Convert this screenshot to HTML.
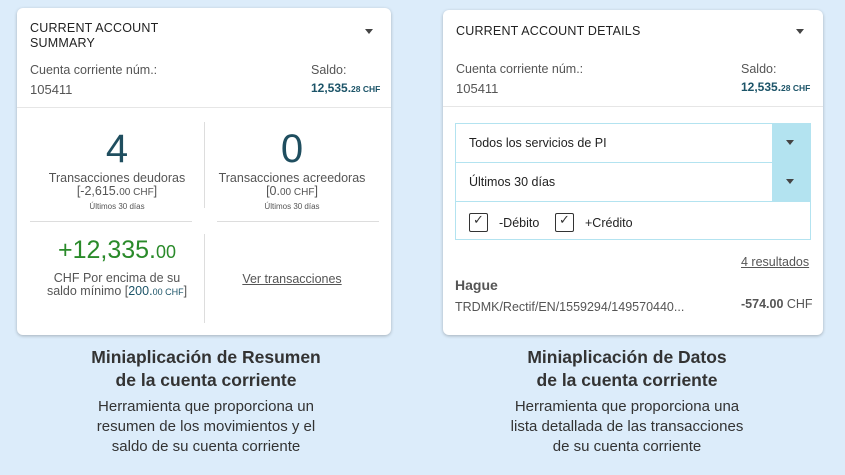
<!DOCTYPE html>
<html><head><meta charset="utf-8"><style>
*{margin:0;padding:0;box-sizing:border-box}
body{width:845px;height:475px;background:#dcecfa;font-family:"Liberation Sans",sans-serif;position:relative;overflow:hidden;color:#333}
.card{position:absolute;background:#fff;border-radius:6px;box-shadow:0 1px 3px rgba(0,0,0,.25)}
.a{position:absolute;white-space:nowrap}
.t{font-size:12.5px;letter-spacing:.2px;color:#222;line-height:15px}
.g{font-size:12.5px;color:#555}
.tri{position:absolute;width:0;height:0;border-left:4px solid transparent;border-right:4px solid transparent;border-top:5px solid #444}
.bal{font-size:12px;font-weight:bold;color:#1c5468}
.bal small{font-size:8.5px}
.hl{position:absolute;height:1px;background:#ddd}
.vl{position:absolute;width:1px;background:#ddd}
.c{text-align:center;transform:translateX(-50%)}
.h{font-size:17.5px;font-weight:bold;color:#333;line-height:23px}
.d{font-size:15px;color:#333;line-height:20px}
.cb{position:absolute;width:19px;height:19px;border:1.5px solid #333;border-radius:2px}
</style></head><body>
<div class="card" style="left:17px;top:8px;width:374px;height:327px">
<div class="a t" style="left:13px;top:13px">CURRENT ACCOUNT<br>SUMMARY</div>
<div class="tri" style="left:348px;top:21px"></div>
<div class="a g" style="left:13px;top:55px">Cuenta corriente núm.:</div>
<div class="a g" style="left:13px;top:74px;font-size:13px">105411</div>
<div class="a g" style="left:294px;top:55px">Saldo:</div>
<div class="a bal" style="left:294px;top:73px">12,535.<small>28 CHF</small></div>
<div class="hl" style="left:0;top:99px;width:374px;background:#e6e6e6"></div>
<div class="vl" style="left:187px;top:114px;height:86px"></div>
<div class="vl" style="left:187px;top:226px;height:89px"></div>
<div class="hl" style="left:13px;top:213px;width:162px"></div>
<div class="hl" style="left:200px;top:213px;width:162px"></div>
<div class="a c" style="left:100px;top:118px;font-size:40px;color:#1f4e5f;line-height:46px">4</div>
<div class="a c g" style="left:100px;top:164px;font-size:12.5px;line-height:13px;text-align:center">Transacciones deudoras<br>[-2,615.<span style="font-size:10px">00 CHF</span>]<br><span style="font-size:8px">Últimos 30 días</span></div>
<div class="a c" style="left:275px;top:118px;font-size:40px;color:#1f4e5f;line-height:46px">0</div>
<div class="a c g" style="left:275px;top:164px;font-size:12.5px;line-height:13px;text-align:center">Transacciones acreedoras<br>[0.<span style="font-size:10px">00 CHF</span>]<br><span style="font-size:8px">Últimos 30 días</span></div>
<div class="a c" style="left:100px;top:228px;font-size:25px;color:#2a8a2a">+12,335.<span style="font-size:18px">00</span></div>
<div class="a c g" style="left:100px;top:264px;line-height:13px;text-align:center">CHF Por encima de su<br>saldo mínimo [<span style="color:#1c5468">200.<span style="font-size:9px">00 CHF</span></span>]</div>
<div class="a c g" style="left:275px;top:264px;text-decoration:underline">Ver transacciones</div>
</div>
<div class="card" style="left:443px;top:10px;width:380px;height:325px">
<div class="a t" style="left:13px;top:14px">CURRENT ACCOUNT DETAILS</div>
<div class="tri" style="left:353px;top:19px"></div>
<div class="a g" style="left:13px;top:52px">Cuenta corriente núm.:</div>
<div class="a g" style="left:13px;top:71px;font-size:13px">105411</div>
<div class="a g" style="left:298px;top:52px">Saldo:</div>
<div class="a bal" style="left:298px;top:70px">12,535.<small>28 CHF</small></div>
<div class="hl" style="left:0;top:96px;width:380px;background:#e6e6e6"></div>
<div style="position:absolute;left:12px;top:113px;width:356px;height:117px;border:1px solid #b3e3f0">
<div style="position:absolute;right:0;top:0;width:38px;height:77px;background:#b3e3f0"></div>
<div class="hl" style="left:0;top:38px;width:317px;background:#b3e3f0"></div>
<div class="hl" style="left:0;top:77px;width:354px;background:#b3e3f0"></div>
<div class="a" style="left:13px;top:12px;font-size:12.5px;color:#222">Todos los servicios de PI</div>
<div class="a" style="left:13px;top:51px;font-size:12.5px;color:#222">Últimos 30 días</div>
<div class="tri" style="left:330px;top:16px"></div>
<div class="tri" style="left:330px;top:55px"></div>
<div class="cb" style="left:13px;top:89px"></div><div class="a" style="left:17px;top:88px;font-size:13px">✓</div>
<div class="a" style="left:43px;top:92px;font-size:12.5px;color:#222">-Débito</div>
<div class="cb" style="left:99px;top:89px"></div><div class="a" style="left:103px;top:88px;font-size:13px">✓</div>
<div class="a" style="left:129px;top:92px;font-size:12.5px;color:#222">+Crédito</div>
</div>
<div class="a g" style="left:298px;top:245px;text-decoration:underline">4 resultados</div>
<div class="a" style="left:12px;top:267px;font-size:14px;font-weight:bold;color:#555">Hague</div>
<div class="a g" style="left:12px;top:290px">TRDMK/Rectif/EN/1559294/149570440...</div>
<div class="a g" style="left:298px;top:287px;font-size:12.5px"><b>-574.00</b> CHF</div>
</div>
<div class="a c h" style="left:206px;top:346px;text-align:center">Miniaplicación de Resumen<br>de la cuenta corriente</div>
<div class="a c d" style="left:206px;top:397px;text-align:center">Herramienta que proporciona un<br>resumen de los movimientos y el<br>saldo de su cuenta corriente</div>
<div class="a c h" style="left:627px;top:346px;text-align:center">Miniaplicación de Datos<br>de la cuenta corriente</div>
<div class="a c d" style="left:627px;top:397px;text-align:center">Herramienta que proporciona una<br>lista detallada de las transacciones<br>de su cuenta corriente</div>
</body></html>
